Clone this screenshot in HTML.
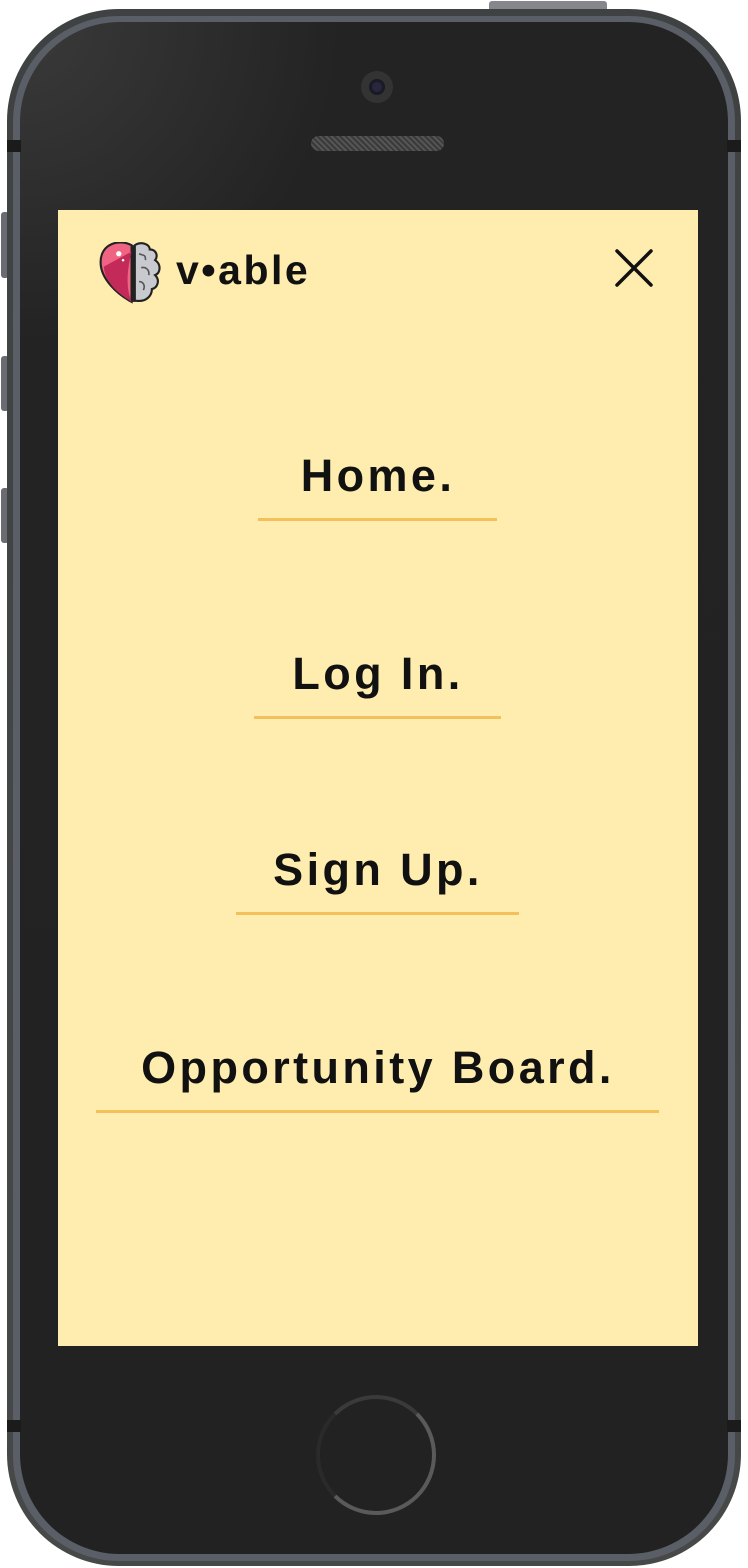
<!DOCTYPE html>
<html><head><style>
html,body{margin:0;padding:0;width:748px;height:1568px;background:#fff;overflow:hidden;font-family:"Liberation Sans",sans-serif}
.abs{position:absolute}
.item{position:absolute;left:0;width:640px;text-align:center;font-size:45px;font-weight:bold;color:#111;letter-spacing:3.4px}
.ul{position:absolute;height:3px;background:#f3c05b}
</style></head><body>
<div class="abs" style="left:1px;top:212px;width:8px;height:66px;background:#6a6c72;border-radius:3px"></div>
<div class="abs" style="left:1px;top:356px;width:8px;height:55px;background:#6a6c72;border-radius:3px"></div>
<div class="abs" style="left:1px;top:488px;width:8px;height:55px;background:#6a6c72;border-radius:3px"></div>
<div class="abs" style="left:489px;top:1px;width:118px;height:12px;background:#86878c;border-radius:3px"></div>
<div class="abs" style="left:7px;top:9px;width:734px;height:1557px;border-radius:112px;background:linear-gradient(#3f4242,#464948);"></div>
<div class="abs" style="left:13px;top:16px;width:722px;height:1545px;border-radius:106px;background:#5a5e66;"></div>
<div class="abs" style="left:20px;top:22px;width:708px;height:1532px;border-radius:100px;background:radial-gradient(circle at 0 0,#3a3a3a 0,#232323 320px,#222 100%);"></div>
<div class="abs" style="left:7px;top:140px;width:14px;height:12px;background:#1b1b1b"></div>
<div class="abs" style="left:727px;top:140px;width:14px;height:12px;background:#1b1b1b"></div>
<div class="abs" style="left:7px;top:1420px;width:14px;height:12px;background:#1b1b1b"></div>
<div class="abs" style="left:727px;top:1420px;width:14px;height:12px;background:#1b1b1b"></div>
<div class="abs" style="left:361px;top:71px;width:32px;height:32px;border-radius:50%;background:#333"></div>
<div class="abs" style="left:369px;top:79px;width:16px;height:16px;border-radius:50%;background:#2b2640;box-shadow:inset 0 0 0 3px #1a1a22"></div>
<div class="abs" style="left:311px;top:136px;width:133px;height:15px;border-radius:8px;background:repeating-linear-gradient(45deg,#555 0 2px,#3a3a3a 2px 4px)"></div>
<div class="abs" style="left:316px;top:1395px;width:120px;height:120px;border-radius:50%;border:4px solid #5a5a5a;border-left-color:#2a2a2a;border-top-color:#3a3a3a;box-sizing:border-box;background:#222"></div>
<div class="abs" style="left:58px;top:210px;width:640px;height:1136px;background:#feedae;overflow:hidden">
  <svg class="abs" style="left:39px;top:32px" width="66" height="62" viewBox="1 1 57 58">
    <path d="M31 4 C20 -2 2 2 2 20 C2 36 18 50 31 57 Z" fill="#ef6482" stroke="#222" stroke-width="2"/>
    <path d="M31 10 C26 30 26 45 31 57 C20 50 6 40 5 24" fill="#c42a59"/>
    <circle cx="19" cy="12" r="2.5" fill="#fff"/><circle cx="23" cy="18" r="1.2" fill="#fff"/>
    <path d="M34 4 C40 0 48 3 48 8 C54 8 56 14 53 18 C59 22 58 30 53 32 C58 37 55 44 50 45 C50 52 44 57 36 56 L34 56 Z" fill="#c9cacf" stroke="#222" stroke-width="2"/>
    <path d="M38 12 C42 14 44 12 44 18 M40 25 C45 24 48 28 47 32 M38 38 C42 38 44 42 42 46" fill="none" stroke="#555" stroke-width="1.5"/>
    <line x1="32.5" y1="4" x2="32.5" y2="57" stroke="#222" stroke-width="2"/>
  </svg>
  <div class="abs" style="left:118px;top:37px;font-size:41px;font-weight:bold;color:#111;letter-spacing:2.5px">v•able</div>
  <svg class="abs" style="left:556px;top:38px" width="40" height="40" viewBox="0 0 40 40"><path d="M3 3 L37 37 M37 3 L3 37" stroke="#111" stroke-width="3.5" stroke-linecap="round"/></svg>
  <div class="item" style="top:240px">Home.</div>
  <div class="ul" style="left:200px;top:308px;width:239px"></div>
  <div class="item" style="top:438px">Log In.</div>
  <div class="ul" style="left:196px;top:506px;width:247px"></div>
  <div class="item" style="top:634px">Sign Up.</div>
  <div class="ul" style="left:178px;top:702px;width:283px"></div>
  <div class="item" style="top:832px">Opportunity Board.</div>
  <div class="ul" style="left:38px;top:900px;width:563px"></div>
</div>
</body></html>
